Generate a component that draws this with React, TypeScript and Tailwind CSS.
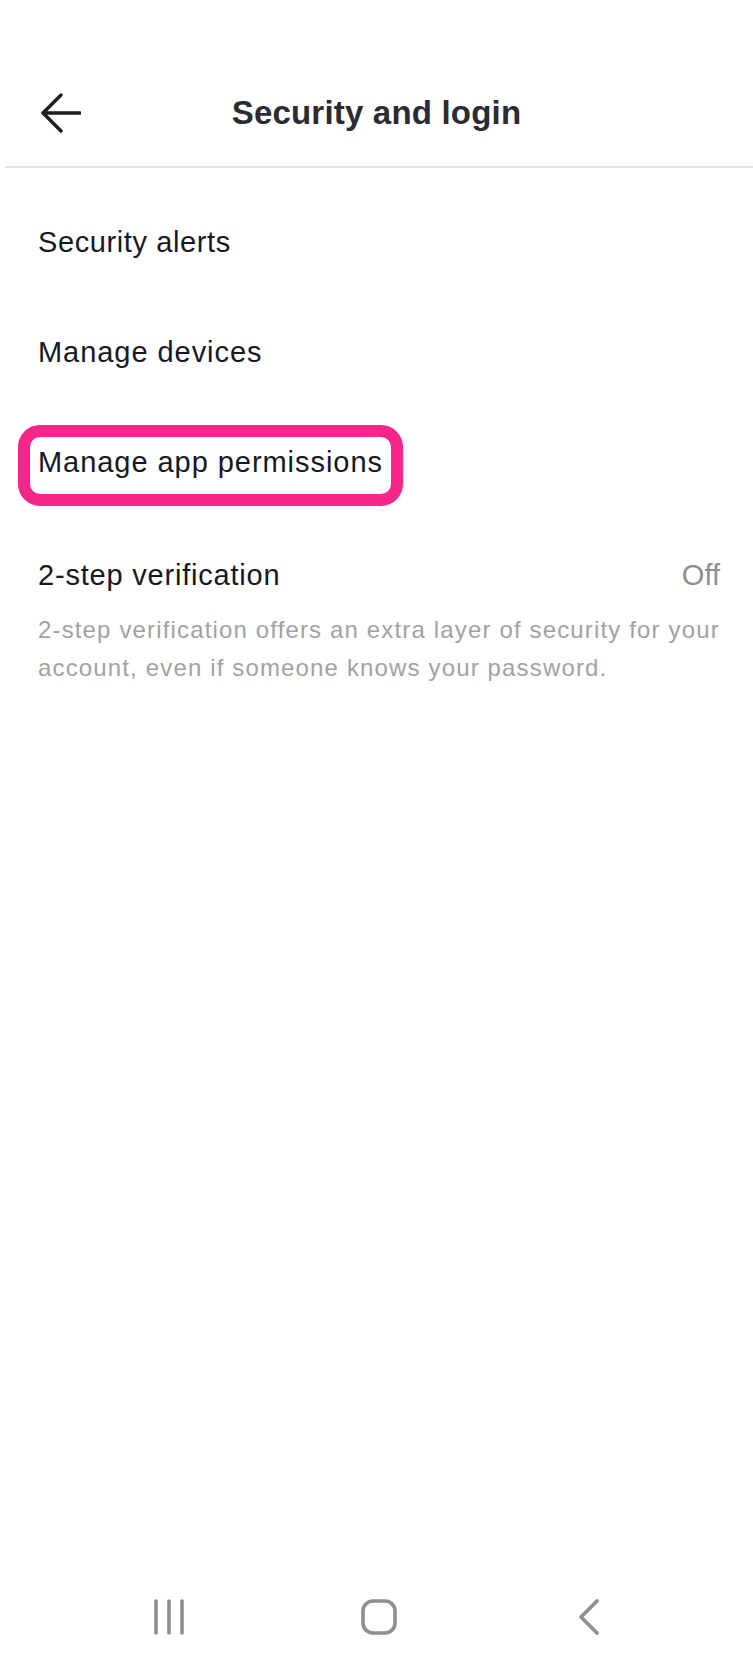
export default function App() {
  const font = { fontFamily: '"Liberation Sans", Arial, sans-serif' }

  return (
    <div className="min-h-[1659px] w-[753px] bg-white flex flex-col" style={font}>
      {/* Header */}
      <div className="pt-[83px]">
        <div className="flex items-center h-[60px]">
          <div className="w-[82px] pl-[41px] flex items-center">
            <svg width="40" height="40" viewBox="0 0 40 40" fill="none">
              <path
                d="M20 2 L2 20 L20 38 M2 20 H39"
                stroke="#1c1c22"
                strokeWidth="3.4"
                strokeLinecap="round"
                strokeLinejoin="round"
              />
            </svg>
          </div>
          <h1 className="flex-1 text-center text-[33px] font-bold tracking-[0.2px] text-[#2b2b33]">Security and login</h1>
          <div className="w-[82px]" />
        </div>
        <div className="h-[23px]" />
        <div className="ml-[5px] h-[2px] bg-[#e3e3e3]" />
      </div>

      {/* Menu items */}
      <div className="pt-[19px] flex flex-col">
        <div className="h-[110px] flex items-center px-[38px]">
          <span className="text-[29px] leading-[36px] tracking-[0.6px] text-[#161823]">Security alerts</span>
        </div>
        <div className="h-[110px] flex items-center px-[38px]">
          <span className="text-[29px] leading-[36px] tracking-[0.95px] text-[#161823]">Manage devices</span>
        </div>
        <div className="h-[110px] flex items-center px-[38px]">
          <span className="relative text-[29px] leading-[36px] tracking-[0.95px] text-[#161823]">
            Manage app permissions
            <span className="absolute -left-[20px] -right-[20px] -top-[19px] -bottom-[26px] rounded-[22px] border-[12px] border-[#f7268b]" />
          </span>
        </div>

        <div className="mt-[40px] pl-[38px] pr-[33px]">
          <div className="flex items-center justify-between">
            <span className="text-[29px] leading-[36px] tracking-[0.8px] text-[#161823]">2-step verification</span>
            <span className="text-[29px] leading-[36px] text-[#8e8e8e]">Off</span>
          </div>
          <p className="mt-[18px] text-[24px] leading-[38px] tracking-[1.15px] text-[#a2a2a2]">
            2-step verification offers an extra layer of security for your account, even if someone knows your password.
          </p>
        </div>
      </div>

      <div className="flex-1" />

      {/* Android nav bar */}
      <div className="h-[84px] flex items-center justify-center gap-[160px] pl-[4px]">
        <div className="w-[50px] flex justify-center">
          <svg width="34" height="36" viewBox="0 0 34 36" fill="none">
            <path d="M4 2 V34 M17 2 V34 M30 2 V34" stroke="#8e8e8e" strokeWidth="3.6" strokeLinecap="round" />
          </svg>
        </div>
        <div className="w-[50px] flex justify-center">
          <svg width="36" height="36" viewBox="0 0 36 36" fill="none">
            <rect x="2" y="2" width="32" height="32" rx="10" stroke="#8e8e8e" strokeWidth="3.6" />
          </svg>
        </div>
        <div className="w-[50px] flex justify-center">
          <svg width="22" height="36" viewBox="0 0 22 36" fill="none">
            <path d="M19 2 L3 18 L19 34" stroke="#8e8e8e" strokeWidth="3.6" strokeLinecap="round" strokeLinejoin="round" />
          </svg>
        </div>
      </div>
    </div>
  )
}
